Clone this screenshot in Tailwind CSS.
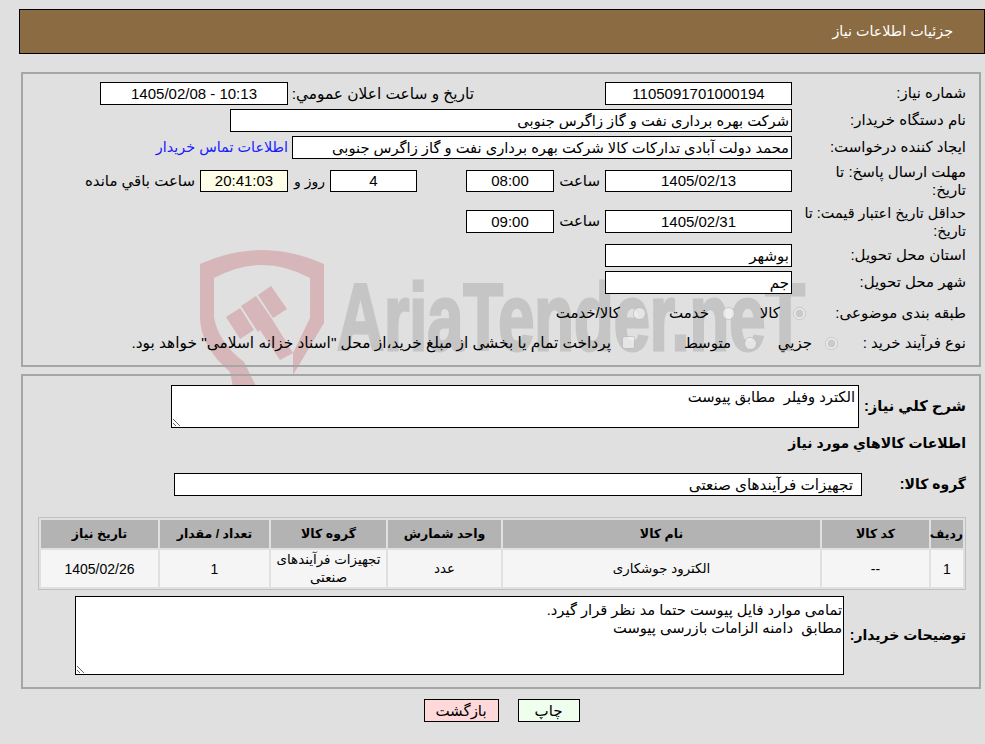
<!DOCTYPE html>
<html lang="fa" dir="rtl">
<head>
  <meta charset="UTF-8">
  <title>جزئیات اطلاعات نیاز</title>
  <script src="https://cdn.jsdelivr.net/npm/@tailwindcss/browser@4"></script>
</head>
<body class="relative w-[985px] h-[744px] overflow-hidden bg-[#e0e0e0] text-black text-[15px] font-['Liberation_Sans','DejaVu_Sans',sans-serif]">

  <!-- watermark behind the page -->
  <svg class="absolute left-0 top-0 w-[985px] h-[744px]" viewBox="0 0 985 744">
    <path class="fill-[#d6b6b8]" fill-rule="evenodd" d="M200 264Q262 236 324 264V323L293 375V353L310 318V278Q262 252 214 278V317Q218 342 244 362L259 392H234L230 372Q200 346 200 317Z"/>
    <path class="fill-[#d6b6b8]" d="M226 317L240 308L254 330L240 339ZM241 306L256 296L272 319L293 353L280 360L260 330L258 332Z"/>
    <path class="fill-[#d6b6b8]" d="M258 295L271 286L287 309L273 318Z"/>
    <text x="337" y="350" textLength="468" lengthAdjust="spacingAndGlyphs" class="[direction:ltr] fill-[#c5c5c5] stroke-[#c5c5c5] stroke-[3px] text-[94px] font-bold">AriaTender.neT</text>
  </svg>

  <div class="relative">
    <div class="ml-[19px] mt-[9px] h-[45px] flex items-center pr-[31px] border border-black bg-[#8b6b42] text-white text-[14.3px]">جزئیات اطلاعات نیاز</div>

    <section class="ml-[21px] mr-[4px] mt-[18px] h-[295px] border-2 border-[#a6a6a6] pt-[8px] pr-[13px]">
      <div class="flex items-center h-[23px] mb-[4px]">
        <div class="w-[174px] shrink-0">شماره نیاز:</div>
        <input readonly value="1105091701000194" class="w-[187px] h-[23px] border border-black bg-white text-center">
        <div class="mr-[131px] w-[181px] shrink-0 whitespace-nowrap text-[15.4px]">تاریخ و ساعت اعلان عمومي:</div>
        <input readonly value="10:13 - 1405/02/08" class="mr-[5px] w-[188px] h-[23px] border border-black bg-white text-center">
      </div>
      <div class="flex items-center h-[23px] mb-[4px]">
        <div class="w-[174px] shrink-0">نام دستگاه خریدار:</div>
        <input readonly value="شرکت بهره برداری نفت و گاز زاگرس جنوبی" class="w-[562px] h-[23px] border border-black bg-white px-[2px] text-[14.7px]">
      </div>
      <div class="flex items-center h-[23px] mb-[4px]">
        <div class="w-[174px] shrink-0">ایجاد کننده درخواست:</div>
        <input readonly value="محمد دولت آبادی تدارکات کالا شرکت بهره برداری نفت و گاز زاگرس جنوبی" class="w-[500px] h-[23px] border border-black bg-white px-[2px] text-[14.7px]">
        <a class="mr-[4px] text-[#1a1aff] text-[14.4px]" href="#">اطلاعات تماس خریدار</a>
      </div>
      <div class="flex items-center h-[36px] mb-[5px]">
        <div class="w-[174px] shrink-0 leading-[18px] whitespace-nowrap">مهلت ارسال پاسخ: تا<br>تاریخ:</div>
        <input readonly value="1405/02/13" class="w-[187px] h-[22px] border border-black bg-white text-center">
        <div class="w-[51px] shrink-0 pr-[5px]">ساعت</div>
        <input readonly value="08:00" class="w-[88px] h-[22px] border border-black bg-white text-center">
        <input readonly value="4" class="mr-[49px] w-[87px] h-[22px] border border-black bg-white text-center">
        <div class="w-[42px] shrink-0 pr-[5px] text-[14px]">روز و</div>
        <input readonly value="20:41:03" class="w-[88px] h-[22px] border border-black bg-[#ffffe8] text-center">
        <div class="mr-[5px] whitespace-nowrap">ساعت باقي مانده</div>
      </div>
      <div class="flex items-center h-[35px] mb-[5px]">
        <div class="w-[174px] shrink-0 leading-[18px] whitespace-nowrap text-[14.4px]">حداقل تاریخ اعتبار قیمت: تا<br>تاریخ:</div>
        <input readonly value="1405/02/31" class="w-[187px] h-[23px] border border-black bg-white text-center">
        <div class="w-[51px] shrink-0 pr-[5px]">ساعت</div>
        <input readonly value="09:00" class="w-[88px] h-[23px] border border-black bg-white text-center">
      </div>
      <div class="flex items-center h-[23px] mb-[4px]">
        <div class="w-[174px] shrink-0">استان محل تحویل:</div>
        <input readonly value="بوشهر" class="w-[187px] h-[23px] border border-black bg-white px-[2px]">
      </div>
      <div class="flex items-center h-[23px] mb-[4px]">
        <div class="w-[174px] shrink-0">شهر محل تحویل:</div>
        <input readonly value="جم" class="w-[187px] h-[23px] border border-black bg-white px-[2px]">
      </div>
      <div class="flex items-center h-[30px]">
        <div class="w-[160px] shrink-0">طبقه بندی موضوعی:</div>
        <label class="w-[71px] flex items-center gap-[13px]"><input type="radio" name="cat" checked disabled class="m-0">کالا</label>
        <label class="w-[89px] flex items-center gap-[13px]"><input type="radio" name="cat" disabled class="m-0">خدمت</label>
        <label class="flex items-center gap-[13px]"><input type="radio" name="cat" disabled class="m-0">کالا/خدمت</label>
      </div>
      <div class="flex items-center h-[30px]">
        <div class="w-[128px] shrink-0">نوع فرآیند خرید :</div>
        <label class="w-[81px] flex items-center gap-[13px]"><input type="radio" name="kind" checked disabled class="m-0">جزيي</label>
        <label class="w-[122px] flex items-center gap-[13px]"><input type="radio" name="kind" disabled class="m-0">متوسط</label>
        <label class="flex items-center gap-[11px] whitespace-nowrap text-[15.4px]"><input type="checkbox" disabled class="m-0">پرداخت تمام یا بخشی از مبلغ خرید،از محل "اسناد خزانه اسلامی" خواهد بود.</label>
      </div>
    </section>

    <section class="ml-[21px] mr-[4px] mt-[7px] h-[315px] border-2 border-[#a6a6a6] pt-[9px] pr-[13px] text-[14px]">
      <div class="flex items-center h-[43px]">
        <div class="w-[107px] shrink-0 font-bold text-[14.7px]">شرح کلي نیاز:</div>
        <textarea readonly class="w-[688px] h-[43px] border border-black bg-white px-[3px] pt-[2px] leading-[18px] text-[14.7px]">الکترد وفیلر  مطابق پیوست</textarea>
      </div>
      <div class="mt-[5px] h-[20px] leading-[20px] font-bold">اطلاعات کالاهاي مورد نیاز</div>
      <div class="flex items-center h-[23px] mt-[20px]">
        <div class="w-[104px] shrink-0 font-bold">گروه کالا:</div>
        <input readonly value="تجهیزات فرآیندهای صنعتی" class="w-[688px] h-[23px] border border-black bg-white px-[8px] text-[15.2px]">
      </div>
      <table class="mt-[21px] w-[928px] table-fixed border-separate border-spacing-[2px] border border-[#c0c0c0] text-center">
        <colgroup>
          <col class="w-[32px]"><col class="w-[107px]"><col class="w-[317px]"><col class="w-[113px]"><col class="w-[115px]"><col class="w-[109px]"><col class="w-[117px]">
        </colgroup>
        <thead>
          <tr class="h-[28px] bg-[#b3b3b3] text-[12.5px] font-bold">
            <th>ردیف</th><th>کد کالا</th><th>نام کالا</th><th>واحد شمارش</th><th>گروه کالا</th><th>تعداد / مقدار</th><th>تاریخ نیاز</th>
          </tr>
        </thead>
        <tbody>
          <tr class="h-[37px] bg-[#f5f5f5] leading-[18px]">
            <td>1</td><td>--</td><td class="text-[13.4px]">الکترود جوشکاری</td><td class="text-[13.4px]">عدد</td><td class="text-[13.4px]">تجهیزات فرآیندهای صنعتی</td><td>1</td><td>1405/02/26</td>
          </tr>
        </tbody>
      </table>
      <div class="flex items-center h-[79px] mt-[6px]">
        <div class="w-[122px] shrink-0 font-bold">توضیحات خریدار:</div>
        <textarea readonly class="w-[769px] h-[79px] border border-black bg-white px-[1px] pt-[4px] leading-[18px] text-[14.7px]">تمامی موارد فایل پیوست حتما مد نظر قرار گیرد.
مطابق  دامنه الزامات بازرسی پیوست</textarea>
      </div>
    </section>

    <div class="flex justify-center gap-[19px] mt-[10px] pl-[18px]">
      <button class="order-2 w-[75px] h-[23px] border border-black bg-[#ffd9d9]">بازگشت</button>
      <button class="order-1 w-[62px] h-[23px] border border-black bg-[#eeffee]">چاپ</button>
    </div>
  </div>
</body>
</html>
